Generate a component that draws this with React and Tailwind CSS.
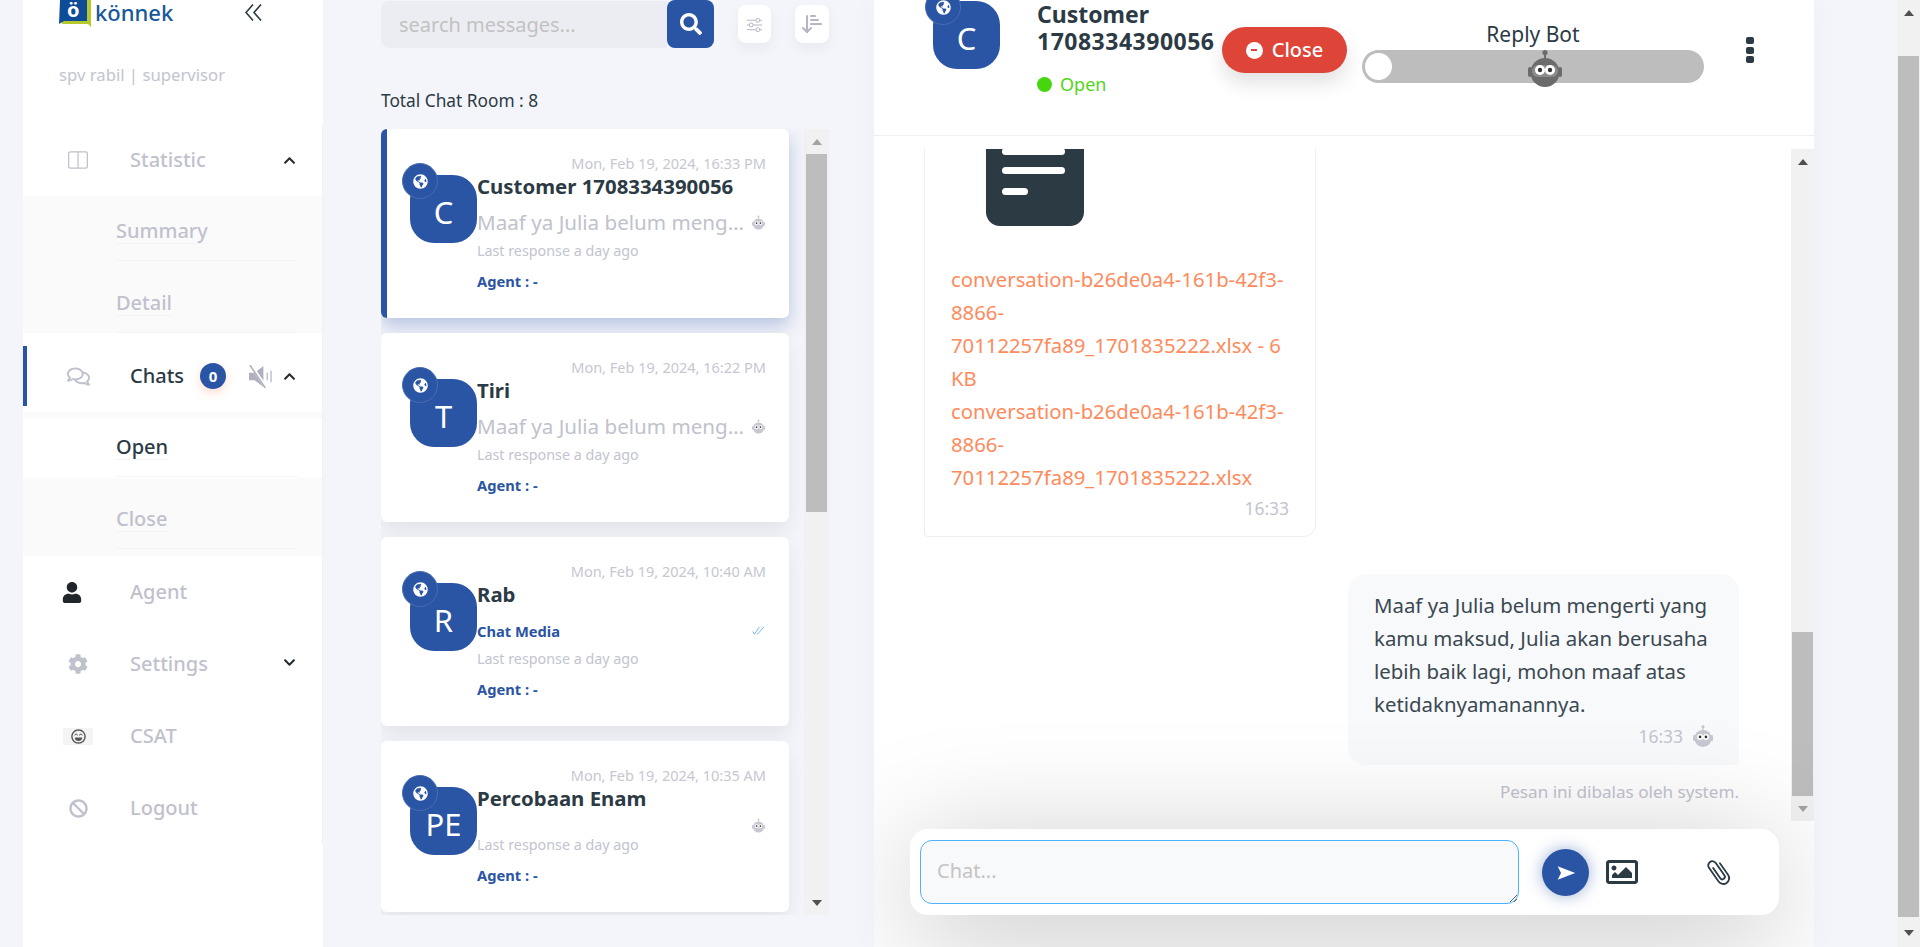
import { FaChevronUp, FaChevronDown, FaRegComments, FaUser, FaCog, FaBan, FaRegLaughBeam, FaSearch, FaGlobeAmericas, FaRegImage } from 'react-icons/fa'
import { BsLayoutSplit, BsSliders } from 'react-icons/bs'
import { LuArrowDownNarrowWide } from 'react-icons/lu'

const Bot = ({ className, body = '#6b6b6b' }) => (
  <svg viewBox="0 0 34 37" className={className}>
    <circle cx="17" cy="2.6" r="2.6" fill={body} />
    <rect x="16" y="4" width="2" height="5" fill={body} />
    <rect x="0" y="17" width="4" height="10" rx="2" fill={body} />
    <rect x="30" y="17" width="4" height="10" rx="2" fill={body} />
    <circle cx="17" cy="22.5" r="14.5" fill={body} />
    <rect x="4" y="15" width="26" height="12" rx="6" fill="#d6d6d6" opacity="0.3" />
    <circle cx="12" cy="20" r="5" fill="#fff" />
    <circle cx="22" cy="20" r="5" fill="#fff" />
    <circle cx="12" cy="20" r="2.2" fill="#333" />
    <circle cx="22" cy="20" r="2.2" fill="#333" />
  </svg>
)

const Logo = () => (
  <div className="flex items-start">
    <div className="relative h-[27px] w-[33px]">
      <svg viewBox="0 0 33 27" className="h-[27px] w-[33px]">
        <path d="M3 0 H32 V27 L29 24 H3 Z" fill="#b6c92c" />
        <path d="M1 0 H28 V21 H5 L0 24 Z" fill="#0f4c97" />
      </svg>
      <span className="absolute left-[8px] top-0 text-[20px] font-bold leading-[20px] text-white">ö</span>
    </div>
    <span className="ml-[3px] text-[22px] font-medium leading-[24px] text-[#17589a]">könnek</span>
  </div>
)

const NavRow = ({ icon, label, active, bar, chevron, className = 'h-[72px]', children }) => (
  <div className={`relative flex items-center bg-white ${className}`}>
    {bar && <div className="absolute left-0 top-[6px] h-[60px] w-[4px] bg-[#2a54a4]" />}
    <div className="flex w-[107px] justify-center pl-[4px] pr-[1px]">{icon}</div>
    <span className={`text-[20px] font-medium ${active ? 'text-[#2b3a44]' : 'text-[#bfc1cd]'}`}>{label}</span>
    {children}
    {chevron && <div className="absolute left-[260px] top-0 flex h-full items-center text-[#222b33]">{chevron}</div>}
  </div>
)

const SubItem = ({ label, active, className = '' }) => (
  <div className={`ml-[93px] mr-[24px] flex items-center border-b border-[#f4f4f6] ${className}`}>
    <span className={`border-b border-[#f4f4f6] text-[20px] font-medium leading-[24px] ${active ? 'text-[#2b3a44]' : 'text-[#bfc1cd]'}`}>{label}</span>
  </div>
)

const Sidebar = () => (
  <aside className="ml-[23px] flex h-full w-[300px] flex-col bg-white">
    <div className="relative h-[125px]">
      <div className="pl-[36px]"><Logo /></div>
      <svg viewBox="0 0 17 17" className="absolute left-[222px] top-[4px] h-[17px] w-[17px]" fill="none" stroke="#2b3a44" strokeWidth="1.6">
        <path d="M8 0.5 L1 8.5 L8 16.5" />
        <path d="M16 0.5 L9 8.5 L16 16.5" />
      </svg>
      <p className="mt-[37px] pl-[36px] text-[16.7px] leading-[22px] text-[#c2c4cf]">spv rabil | supervisor</p>
    </div>
    <nav className="border-r border-[#f1f1f3]">
      <NavRow
        className="mb-[1px] h-[70px]"
        icon={<BsLayoutSplit className="h-[20px] w-[20px] text-[#bfc1cd]" />}
        label="Statistic"
        chevron={<FaChevronUp className="h-[13px] w-[13px]" />}
      />
      <div className="bg-[#fafafa]">
        <SubItem label="Summary" className="mb-[7px] h-[65px] pt-[7px]" />
        <SubItem label="Detail" className="mb-[7px] h-[65px] pt-[6px]" />
      </div>
      <NavRow
        bar
        active
        icon={<FaRegComments className="h-[23px] w-[23px] text-[#bfc1cd]" />}
        label="Chats"
        chevron={<FaChevronUp className="h-[13px] w-[13px]" />}
      >
        <span className="ml-[16px] flex h-[26px] w-[26px] items-center justify-center rounded-full bg-[#2a54a4] text-[15px] font-bold text-white shadow-[0_4px_10px_rgba(255,120,80,0.25)]">0</span>
        <svg viewBox="0 0 24 24" className="absolute left-[226px] top-[25px] h-[23px] w-[23px]">
          <path d="M0 8 H6 L15 1 V23 L6 16 H0 Z" fill="#aeb0bf" />
          <path d="M2 0 L18 24" stroke="#fff" strokeWidth="3.4" />
          <path d="M1 0 L17 24" stroke="#aeb0bf" strokeWidth="1.6" />
          <path d="M19 8 V16 M23 6 V18" stroke="#aeb0bf" strokeWidth="1.2" />
        </svg>
      </NavRow>
      <div className="h-[6px] bg-[#fafafa]" />
      <SubItem label="Open" active className="mb-[1px] h-[59px]" />
      <div className="bg-[#fafafa] pb-[7px] pt-[6px]">
        <SubItem label="Close" className="h-[65px] pt-[6px]" />
      </div>
      <NavRow icon={<FaUser className="-ml-[12px] h-[21px] w-[20px] text-[#20262b]" />} label="Agent" />
      <NavRow icon={<FaCog className="h-[20px] w-[20px] text-[#bfc1cd]" />} label="Settings" chevron={<FaChevronDown className="-mt-[4px] h-[13px] w-[13px]" />} />
      <NavRow
        icon={
          <span className="flex h-[17px] w-[30px] items-center justify-center bg-[#f4f4f4]">
            <FaRegLaughBeam className="h-[15px] w-[15px] text-[#555]" />
          </span>
        }
        label="CSAT"
      />
      <NavRow icon={<FaBan className="h-[19px] w-[19px] text-[#bfc1cd]" />} label="Logout" />
    </nav>
  </aside>
)

const Avatar = ({ letter, className = '' }) => (
  <div className={`relative flex h-[68px] w-[67px] shrink-0 items-center justify-center rounded-[24px] bg-[#2a54a4] text-[31px] text-white ${className}`}>
    <span className="mt-[6px]">{letter}</span>
    <div className="absolute -left-[8px] -top-[12px] flex h-[36px] w-[36px] items-center justify-center rounded-full border border-[#4a6db0] bg-[#2a54a4]">
      <FaGlobeAmericas className="h-[15px] w-[15px] text-white" />
    </div>
  </div>
)

const ChatCard = ({ letter, name, date, preview, media, tick, empty, selected }) => (
  <div className={`relative flex rounded-md bg-white pb-[27px] pl-[29px] pr-[24px] ${selected ? 'shadow-[0_8px_18px_rgba(42,84,164,0.3)]' : 'shadow-[0_10px_20px_rgba(0,0,0,0.07)]'}`}>
    {selected && <div className="absolute bottom-0 left-0 top-0 w-[6px] rounded-l-md bg-[#2a54a4]" />}
    <Avatar letter={letter} className="mt-[46px]" />
    <div className="min-w-0 flex-1 pt-[24px]">
      <p className="-mr-[1px] text-right text-[14.5px] leading-[20px] text-[#c6c7d1]">{date}</p>
      <p className="whitespace-nowrap text-[20.4px] font-bold leading-[26px] text-[#2b3a44]">{name}</p>
      <div className={`mt-[8px] flex items-center justify-between ${empty ? 'h-[12px]' : 'h-[30px]'}`}>
        {preview && <span className="w-[268px] truncate text-[20.6px] leading-[30px] text-[#c0c2cd]">{preview}</span>}
        {media && <span className="mt-[3px] text-[14.7px] font-bold text-[#2a54a4]">{media}</span>}
        <span />
        {tick ? (
          <svg viewBox="0 0 14 10" className="h-[9px] w-[13px]" fill="none" stroke="#5aa6f5" strokeWidth="0.9">
            <path d="M0.5 6 L2.5 9 L8 1" />
            <path d="M5 8.5 L6 9 L13 1" />
          </svg>
        ) : (
          <Bot className="h-[15px] w-[13px]" body="#c6c7d1" />
        )}
      </div>
      <p className="mt-[4px] text-[14.3px] leading-[20px] text-[#c2c4cf]">Last response a day ago</p>
      <p className="mt-[10px] text-[14.7px] font-bold leading-[20px] text-[#2a54a4]">Agent : -</p>
    </div>
  </div>
)

const ArrowUp = ({ className }) => <div className={`h-0 w-0 border-x-[5px] border-b-[6px] border-x-transparent ${className}`} />
const ArrowDown = ({ className }) => <div className={`h-0 w-0 border-x-[5px] border-t-[6px] border-x-transparent ${className}`} />

const ChatList = () => (
  <section className="ml-[58px] flex h-full w-[448px] flex-col">
    <div className="flex items-start">
      <div className="flex w-[333px]">
        <input
          placeholder="search messages..."
          className="mt-[1px] h-[47px] w-[286px] rounded-l-lg bg-[#ecedf2] pl-[18px] text-[20px] outline-none placeholder:text-[#c2c2c2]"
        />
        <button className="flex h-[48px] w-[47px] items-center justify-center rounded-lg bg-[#2a54a4]">
          <FaSearch className="h-[22px] w-[22px] text-white" />
        </button>
      </div>
      <button className="ml-[24px] mt-[5px] flex h-[38px] w-[33px] items-center justify-center rounded-lg bg-white shadow-[0_6px_14px_rgba(0,0,0,0.05)]">
        <BsSliders className="h-[15px] w-[15px] text-[#b4b6c3]" />
      </button>
      <button className="ml-[24px] mt-[5px] flex h-[38px] w-[34px] items-center justify-center rounded-lg bg-white shadow-[0_6px_14px_rgba(0,0,0,0.05)]">
        <LuArrowDownNarrowWide className="h-[24px] w-[24px] text-[#b4b6c3]" />
      </button>
    </div>
    <p className="mt-[43px] text-[17.3px] leading-[20px] text-[#2b3a44]">Total Chat Room : 8</p>
    <div className="mt-[18px] flex h-[786px] overflow-hidden">
      <div className="flex w-[408px] flex-col gap-[15px]">
        <ChatCard selected letter="C" name="Customer 1708334390056" date="Mon, Feb 19, 2024, 16:33 PM" preview="Maaf ya Julia belum mengerti yang kamu maksud" />
        <ChatCard letter="T" name="Tiri" date="Mon, Feb 19, 2024, 16:22 PM" preview="Maaf ya Julia belum mengerti yang kamu maksud" />
        <ChatCard letter="R" name="Rab" date="Mon, Feb 19, 2024, 10:40 AM" media="Chat Media" tick />
        <ChatCard letter="PE" name="Percobaan Enam" date="Mon, Feb 19, 2024, 10:35 AM" empty />
      </div>
      <div className="ml-[15px] flex w-[25px] flex-col items-center bg-[#f1f1f1]">
        <div className="flex h-[25px] items-center"><ArrowUp className="border-b-[#a3a3a3]" /></div>
        <div className="h-[358px] w-[21px] bg-[#bdbdbd]" />
        <div className="mt-auto flex h-[25px] items-center"><ArrowDown className="border-t-[#505050]" /></div>
      </div>
    </div>
  </section>
)

const ChatHeader = () => (
  <header className="flex h-[136px] shrink-0 items-start border-b border-[#f0f0f2] bg-white">
    <Avatar letter="C" className="ml-[59px] mt-[1px]" />
    <div className="ml-[37px] w-[185px] pt-[1px]">
      <p className="text-[23px] font-bold leading-[27px] text-[#2b3a44]">
        Customer
        <br />
        <span className="tracking-[0.5px]">1708334390056</span>
      </p>
      <div className="mt-[17px] flex items-center gap-[8px]">
        <span className="h-[15px] w-[15px] rounded-full bg-[#46d60f]" />
        <span className="text-[18px] leading-[24px] text-[#52d61a]">Open</span>
      </div>
    </div>
    <button className="mt-[27px] flex h-[46px] w-[125px] items-center justify-center gap-[9px] rounded-full bg-[#de4437] text-[20px] font-medium text-white shadow-[0_10px_20px_rgba(0,0,0,0.12)]">
      <span className="flex h-[17px] w-[17px] items-center justify-center rounded-full bg-white">
        <span className="h-[2px] w-[6px] bg-[#de4437]" />
      </span>
      Close
    </button>
    <div className="ml-[15px] mt-[22px] w-[342px]">
      <p className="text-center text-[21px] leading-[24px] text-[#2b3a44]">Reply Bot</p>
      <div className="relative mt-[4px] flex h-[33px] items-center rounded-full bg-[#bdbdbd]">
        <div className="ml-[3px] h-[27px] w-[27px] rounded-full bg-white" />
        <Bot className="absolute left-[166px] top-0 h-[37px] w-[34px]" />
      </div>
    </div>
    <div className="ml-[42px] mt-[37px] flex flex-col gap-[2.5px]">
      <span className="h-[7px] w-[8px] rounded-[2px] bg-[#2b3a44]" />
      <span className="h-[7px] w-[8px] rounded-[2px] bg-[#2b3a44]" />
      <span className="h-[7px] w-[8px] rounded-[2px] bg-[#2b3a44]" />
    </div>
  </header>
)

const Messages = () => (
  <div className="flex h-[672px] shrink-0 bg-white">
    <div className="flex min-w-0 flex-1 flex-col justify-end overflow-hidden">
      <div className="ml-[50px] w-[392px] rounded-b-xl rounded-bl-sm border border-[#eeeeee] bg-white pb-[18px] pl-[26px] pr-[26px]">
        <svg viewBox="0 0 98 100" className="ml-[35px] h-[100px] w-[98px]">
          <path d="M0 -40 H98 V86 A14 14 0 0 1 84 100 H14 A14 14 0 0 1 0 86 Z" fill="#2c3a44" />
          <rect x="16" y="22" width="63" height="7" rx="3.5" fill="#fff" />
          <rect x="16" y="41" width="63" height="7" rx="3.5" fill="#fff" />
          <rect x="16" y="62" width="26" height="7" rx="3.5" fill="#fff" />
        </svg>
        <p className="mt-[37px] text-[20.3px] leading-[33px] text-[#ff8a5c]">
          conversation-b26de0a4-161b-42f3-
          <br />
          8866-
          <br />
          70112257fa89_1701835222.xlsx - 6
          <br />
          KB
          <br />
          conversation-b26de0a4-161b-42f3-
          <br />
          8866-
          <br />
          70112257fa89_1701835222.xlsx
        </p>
        <p className="mt-[4px] text-right text-[17.4px] leading-[20px] text-[#c2c4cf]">16:33</p>
      </div>
      <div className="ml-[474px] mt-[37px] w-[391px] rounded-[18px] rounded-br-none bg-[#f8f9fb] pb-[18px] pl-[26px] pr-[26px] pt-[15px]">
        <p className="whitespace-nowrap text-[20.4px] leading-[33px] text-[#3a4851]">
          Maaf ya Julia belum mengerti yang
          <br />
          kamu maksud, Julia akan berusaha
          <br />
          lebih baik lagi, mohon maaf atas
          <br />
          ketidaknyamanannya.
        </p>
        <div className="mt-[4px] flex items-center justify-end gap-[10px]">
          <span className="text-[17.4px] leading-[20px] text-[#c2c4cf]">16:33</span>
          <Bot className="h-[22px] w-[20px]" body="#c6c7d1" />
        </div>
      </div>
      <p className="mr-[52px] mt-[17px] pb-[19px] text-right text-[17.1px] leading-[20px] text-[#c2c4cf]">Pesan ini dibalas oleh system.</p>
    </div>
    <div className="flex w-[23px] flex-col items-center bg-[#f1f1f1]">
      <div className="flex h-[26px] items-center"><ArrowUp className="border-b-[#505050]" /></div>
      <div className="mt-[457px] h-[164px] w-[21px] bg-[#bdbdbd]" />
      <div className="mt-auto flex h-[25px] items-center"><ArrowDown className="border-t-[#a3a3a3]" /></div>
    </div>
  </div>
)

const Composer = () => (
  <div className="relative z-10 ml-[36px] mt-[8px] flex h-[86px] w-[869px] items-start rounded-[18px] bg-white pl-[10px] pt-[11px] shadow-[0_20px_120px_rgba(0,0,0,0.25)]">
    <textarea
      placeholder="Chat..."
      className="h-[64px] w-[599px] rounded-xl border border-[#4db2ff] bg-[#f8f9fb] px-[16px] py-[18px] text-[20px] leading-[24px] outline-none placeholder:text-[#c4c4c4]"
    />
    <button className="ml-[23px] mt-[9px] flex h-[47px] w-[47px] items-center justify-center rounded-full bg-[#2a54a4] shadow-[0_0_16px_rgba(42,84,164,0.45)]">
      <svg viewBox="0 0 24 24" className="h-[20px] w-[20px]">
        <path d="M2 4 L23 12 L2 20 L6 12 Z" fill="#fff" />
      </svg>
    </button>
    <FaRegImage className="ml-[17px] mt-[16px] h-[32px] w-[32px] text-[#2c3a44]" />
    <svg viewBox="0 0 16 36" className="ml-[74px] mt-[17px] h-[30px] w-[14px] -rotate-[35deg]" fill="none" stroke="#2c3a44" strokeWidth="2.2" strokeLinecap="round">
      <path d="M5 10 V25 a3 3 0 0 0 6 0 V7 a5 5 0 0 0 -10 0 V27 a7 7 0 0 0 14 0 V10" />
    </svg>
  </div>
)

const ChatPanel = () => (
  <main className="ml-[45px] flex h-full w-[940px] flex-col overflow-hidden bg-white shadow-[0_0_30px_rgba(0,0,0,0.03)]">
    <ChatHeader />
    <div className="h-[13px] shrink-0 bg-white" />
    <Messages />
    <Composer />
  </main>
)

const App = () => (
  <div className="flex h-[947px] w-[1920px] overflow-hidden bg-[#f4f5fa] font-['Noto_Sans',sans-serif]">
    <Sidebar />
    <ChatList />
    <ChatPanel />
    <div className="ml-auto flex w-[23px] flex-col items-center bg-[#f1f1f1]">
      <div className="flex h-[26px] items-center"><ArrowUp className="border-b-[#505050]" /></div>
      <div className="mt-[30px] h-[861px] w-[21px] bg-[#bdbdbd]" />
      <div className="mt-auto flex h-[28px] items-center"><ArrowDown className="border-t-[#505050]" /></div>
    </div>
  </div>
)

export default App
